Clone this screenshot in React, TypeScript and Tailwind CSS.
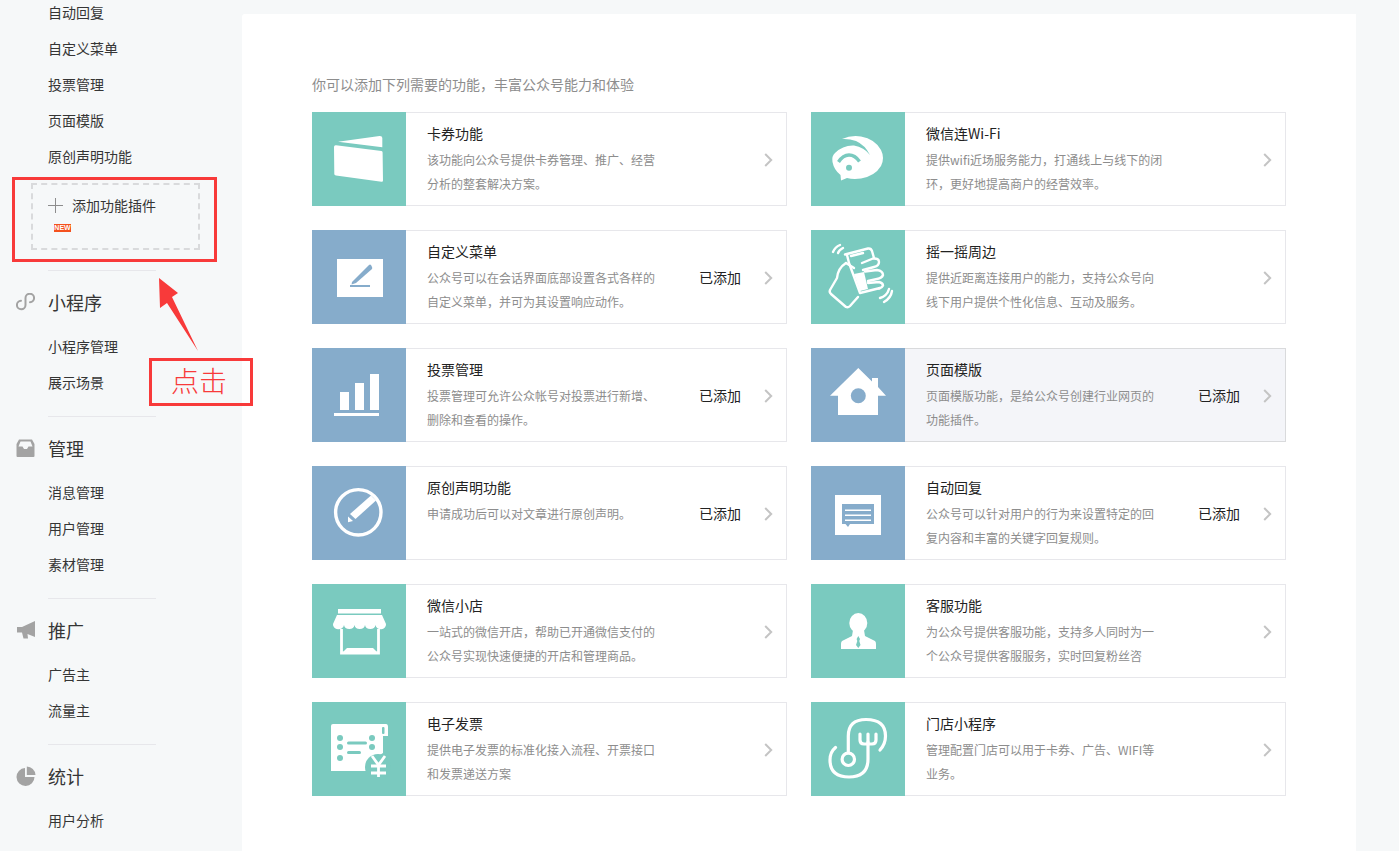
import React from "react";

const cnFont = "font-['Noto_Sans_CJK_SC','Liberation_Sans',sans-serif]";

const TEAL = "bg-[#7acabf]";
const BLUE = "bg-[#86accb]";

const CardIcon = () => (
  <>
    <path d="M26 29.7 L67.5 24 Q70.3 23.8 70.3 26 L70.3 35.3 Z" fill="#fff" />
    <path d="M22 35 Q22 33 24 33.2 L69.5 39 Q70.6 39.2 70.6 40.5 L71 68.5 Q71 70 69.5 69.8 L24 63.6 Q22.3 63.3 22.3 62 Z" fill="#fff" />
  </>
);

const WifiIcon = () => (
  <>
    <path
      d="M31 27 Q40 23 50 24.500 Q64 27 70 38 Q74 46 70 54 Q64 64 50 66.500 Q42 67.500 36 66 L30 68.500 L29.500 63 Q23 58 21.500 50 Q20.500 44 24 41 Q32 33 43 33.500 Q53 35 59 43 Q54 33 45 29 Q38 26.500 31 27 Z"
      fill="#fff"
    />
    <path d="M27.500 50 Q32 43 38 43 Q44 43 48.500 49.500" fill="none" stroke="#7acabf" strokeWidth="3.400" />
    <circle cx="38" cy="55.700" r="3" fill="#7acabf" />
  </>
);

const ShakeIcon = () => (
  <>
    <path d="M43 44 L53 42 L57 59 L49 61 Z" fill="#fff" />
    <g fill="none" stroke="#fff" strokeWidth="2.400" strokeLinecap="round" strokeLinejoin="round">
      <path d="M22 22 Q24 17 29 15" />
      <path d="M27 23 Q28 20 32 18" />
      <path d="M69 68 Q76 66 78 59" />
      <path d="M73 72 Q80 68 81 61" />
      <path d="M34 24.500 L57 18.500 Q60 18 61 21 L63 28" />
      <path d="M40 26 L52 23" />
      <path d="M36 25 L38 33 M38 33 L49 63 L69 58" />
      <path d="M51 33 L62 28.500 Q68 28 68 32 Q68 36 63 37 L52 40" />
      <path d="M54 41.500 L66 40 Q72 41 72 45 Q71 48 66 49 L57 51" />
      <path d="M57 53 L68 52 Q72 53 72 55.500 Q71 58 68 58.500" />
      <path d="M35 33 Q27 38 26 48 L19 60 Q18 62 20 64 L35 77 Q37 78 39 76 L47 67" />
      <path d="M35 33 L43 38" />
    </g>
  </>
);

const MenuIcon = () => (
  <>
    <rect x="25" y="29" width="46" height="38" fill="#fff" />
    <path d="M40 52 L57 35 Q58 34 59 35 L60 37 Q60.500 38 60 39 L44 53 L39.500 54.500 Z" fill="#86accb" />
    <rect x="38" y="55" width="20" height="2" fill="#86accb" />
  </>
);

const BarsIcon = () => (
  <g fill="#fff">
    <rect x="28" y="44" width="9" height="18" />
    <rect x="43" y="35" width="9" height="27" />
    <rect x="58" y="26" width="9" height="36" />
    <rect x="22" y="65" width="45" height="3" />
  </g>
);

const HouseIcon = () => (
  <>
    <path d="M47.300 20 L61 33.500 L61 30 L67 30 L67 39 L75 47.700 L67 47.700 L67 67 L27 67 L27 47.700 L19 47.700 Z" fill="#fff" />
    <circle cx="47.300" cy="47.700" r="7.500" fill="#86accb" />
  </>
);

const OriginalIcon = () => (
  <>
    <circle cx="46.300" cy="46.300" r="22.700" fill="none" stroke="#fff" strokeWidth="3.400" />
    <path d="M38 48 L59 29.500 L64 34.500 L43.500 53 Z" fill="#fff" />
    <path d="M36 50.500 L41 55 L36 56.300 Z" fill="#fff" />
  </>
);

const ReplyIcon = () => (
  <>
    <rect x="24" y="29" width="46" height="40" fill="#fff" />
    <path d="M31 38 H63 V58 H50 H39 L37 61 L34.500 58 H31 Z" fill="#86accb" />
    <g fill="#fff">
      <rect x="34" y="43.500" width="26" height="1.500" />
      <rect x="34" y="48.500" width="26" height="1.500" />
      <rect x="34" y="53.500" width="26" height="1.500" />
    </g>
  </>
);

const ShopIcon = () => (
  <>
    <rect x="26" y="25" width="43" height="4.500" fill="#fff" />
    <path d="M25 31 H70 L74 40 A5 4.500 0 0 1 63.500 41 A5.300 4.500 0 0 1 53 41 A5.300 4.500 0 0 1 42.500 41 A5.300 4.500 0 0 1 32 41 A5.300 4.500 0 0 1 21 40 Z" fill="#fff" />
    <path d="M29.500 45 V69 H66.500 V45" fill="none" stroke="#fff" strokeWidth="2.800" />
    <path d="M31 68 L35 64 H61 L65 68 Z" fill="#fff" />
  </>
);

const ServiceIcon = () => (
  <>
    <ellipse cx="47.300" cy="39" rx="9" ry="10" fill="#fff" />
    <path d="M42 46 H53 L54 52 L64 57 Q65 58 65 60 V65 H30 V60 Q30 58 31 57 L41 52 Z" fill="#fff" />
    <path d="M47.300 52 L49 55 L48.300 57 L49.500 61 L47.300 64 L45 61 L46.300 57 L45.600 55 Z" fill="#7acabf" />
  </>
);

const InvoiceIcon = () => (
  <>
    <path d="M21 22 H74 Q76 22 76 25 V34 H71 V40 V51 Q68 53 66 54 V69 H19 V24 Q19 22 21 22 Z" fill="#fff" />
    <rect x="70" y="25" width="2.500" height="7" rx="1" fill="#7acabf" />
    <g fill="#7acabf">
      <circle cx="28" cy="36" r="3" />
      <circle cx="28" cy="45" r="3" />
      <circle cx="28" cy="56" r="3" />
      <circle cx="60" cy="36" r="3" />
      <circle cx="60" cy="45" r="3" />
      <rect x="35" y="39.500" width="20" height="3" rx="1.500" />
      <rect x="35" y="49" width="14" height="3" rx="1.500" />
      <circle cx="66" cy="65" r="13" />
    </g>
    <g fill="none" stroke="#fff" strokeWidth="2.800">
      <path d="M60 54 L66.500 63 L73 54" />
      <path d="M59 64 H74 M59 71 H74 M66.500 63 V75" />
    </g>
  </>
);

const StoreIcon = () => (
  <g fill="none" stroke="#fff" strokeWidth="3.200" strokeLinecap="round" strokeLinejoin="round">
    <circle cx="37.300" cy="57.300" r="6.200" />
    <path d="M37.300 50 V34 Q37.300 17.500 55 17.500 Q74.500 17.500 74.500 34 Q74.500 42 69 48" />
    <path d="M24.500 45.500 Q19 50 19 58 Q19 75 38 75 Q57 75 57 57 V40" />
    <path d="M49 32 V38 Q49 42 53 42 H61 Q65 42 65 38 V32 M57 32 V40" />
  </g>
);

interface Feature {
  title: string;
  lines: string[];
  color: string;
  icon: React.ReactNode;
  added?: boolean;
  hover?: boolean;
}

const features: Feature[] = [
  { title: "卡券功能", lines: ["该功能向公众号提供卡券管理、推广、经营", "分析的整套解决方案。"], color: TEAL, icon: <CardIcon /> },
  { title: "微信连Wi-Fi", lines: ["提供wifi近场服务能力，打通线上与线下的闭", "环，更好地提高商户的经营效率。"], color: TEAL, icon: <WifiIcon /> },
  { title: "自定义菜单", lines: ["公众号可以在会话界面底部设置各式各样的", "自定义菜单，并可为其设置响应动作。"], color: BLUE, icon: <MenuIcon />, added: true },
  { title: "摇一摇周边", lines: ["提供近距离连接用户的能力，支持公众号向", "线下用户提供个性化信息、互动及服务。"], color: TEAL, icon: <ShakeIcon /> },
  { title: "投票管理", lines: ["投票管理可允许公众帐号对投票进行新增、", "删除和查看的操作。"], color: BLUE, icon: <BarsIcon />, added: true },
  { title: "页面模版", lines: ["页面模版功能，是给公众号创建行业网页的", "功能插件。"], color: BLUE, icon: <HouseIcon />, added: true, hover: true },
  { title: "原创声明功能", lines: ["申请成功后可以对文章进行原创声明。"], color: BLUE, icon: <OriginalIcon />, added: true },
  { title: "自动回复", lines: ["公众号可以针对用户的行为来设置特定的回", "复内容和丰富的关键字回复规则。"], color: BLUE, icon: <ReplyIcon />, added: true },
  { title: "微信小店", lines: ["一站式的微信开店，帮助已开通微信支付的", "公众号实现快速便捷的开店和管理商品。"], color: TEAL, icon: <ShopIcon /> },
  { title: "客服功能", lines: ["为公众号提供客服功能，支持多人同时为一", "个公众号提供客服服务，实时回复粉丝咨"], color: TEAL, icon: <ServiceIcon /> },
  { title: "电子发票", lines: ["提供电子发票的标准化接入流程、开票接口", "和发票递送方案"], color: TEAL, icon: <InvoiceIcon /> },
  { title: "门店小程序", lines: ["管理配置门店可以用于卡券、广告、WIFI等", "业务。"], color: TEAL, icon: <StoreIcon /> },
];

const FeatureCard: React.FC<{ item: Feature }> = ({ item }) => (
  <div className="flex h-[94px] w-[475px]">
    <div className={`${item.color} h-[94px] w-[94px] shrink-0`}>
      <svg viewBox="0 0 94 94" className="h-[94px] w-[94px]">
        {item.icon}
      </svg>
    </div>
    <div
      className={`flex flex-1 items-center border border-l-0 pr-[13px] ${
        item.hover ? "border-[#d9dadc] bg-[#f4f5f9]" : "border-[#e7e7eb] bg-white"
      }`}
    >
      <div className="ml-[21px] h-full flex-1 pt-[8px]">
        <h4 className="text-[14px] font-normal leading-[24px] text-[#222]">{item.title}</h4>
        <div className="mt-[3px] text-[12px] leading-[24px] text-[#8d8d8d]">
          {item.lines.map((line) => (
            <p key={line} className="whitespace-nowrap">
              {line}
            </p>
          ))}
        </div>
      </div>
      {item.added && <span className="mr-[23px] text-[14px] leading-[24px] text-[#222]">已添加</span>}
      <svg viewBox="0 0 9 14" className="mt-[2px] h-[14px] w-[9px]">
        <path d="M1.200 1 L7.200 7 L1.200 13" fill="none" stroke="#c4c4c4" strokeWidth="2" />
      </svg>
    </div>
  </div>
);

const MiniProgramIcon = () => (
  <svg viewBox="0 0 19 18" className="h-[18px] w-[19px]">
    <path
      d="M5 7.700 A4.300 4.300 0 1 0 9.500 12 V5 A4.300 4.300 0 1 1 14 9.300"
      fill="none"
      stroke="#a3a3a3"
      strokeWidth="2"
      strokeLinecap="round"
    />
  </svg>
);

const InboxIcon = () => (
  <svg viewBox="0 0 19 18" className="h-[18px] w-[19px]">
    <path
      d="M3 0.500 H16 L18.500 5 V17 Q18.500 18 17.500 18 H1.500 Q0.500 18 0.500 17 V5 Z M4.500 2.500 L2.500 7.500 H6.500 L8 10 H11 L12.500 7.500 H16.500 L14.500 2.500 Z"
      fill="#a3a3a3"
      fillRule="evenodd"
    />
  </svg>
);

const HornIcon = () => (
  <svg viewBox="0 0 20 20" className="h-[20px] w-[20px]">
    <path d="M1 7 H6 L19 1 V17 L11.500 14 L12 18.500 H7.500 L6 12.500 H1 Z" fill="#a3a3a3" />
  </svg>
);

const PieIcon = () => (
  <svg viewBox="0 0 20 20" className="h-[20px] w-[20px]">
    <path d="M9 2 A9 9 0 1 0 18.500 11 H9 Z" fill="#a3a3a3" />
    <path d="M10.800 0.500 A9 9 0 0 1 19.500 9 H10.800 Z" fill="#a3a3a3" />
  </svg>
);

const NavItem: React.FC<{ label: string }> = ({ label }) => (
  <a className="block h-[36px] pl-[48px] text-[14px] leading-[34px] text-[#353535]">{label}</a>
);

const NavGroup: React.FC<{ title: string; icon: React.ReactNode; items: string[]; last?: boolean }> = ({
  title,
  icon,
  items,
  last,
}) => (
  <div>
    <div className="ml-[48px] h-px w-[108px] bg-[#e7e7eb]" />
    <div className="flex h-[52px] items-center pt-[10px]">
      <span className="flex w-[48px] justify-start pl-[16px]">{icon}</span>
      <span className="text-[18px] leading-[38px] text-[#353535]">{title}</span>
    </div>
    <div className={`mt-[6px] ${last ? "" : "pb-[15px]"}`}>
      {items.map((item) => (
        <NavItem key={item} label={item} />
      ))}
    </div>
  </div>
);

const Sidebar = () => (
  <aside className="w-[242px] shrink-0 -mt-[5px]">
    {["自动回复", "自定义菜单", "投票管理", "页面模版", "原创声明功能"].map((item) => (
      <NavItem key={item} label={item} />
    ))}
    <div className="mb-[20px] ml-[31px] mt-[8px] h-[67px] w-[169px] border-2 border-dashed border-[#d9dadc] pl-[15px] pt-[8px]">
      <div className="flex h-[24px] items-center">
        <svg viewBox="0 0 15 15" className="h-[15px] w-[15px]">
          <path d="M7.500 0 V15 M0 7.500 H15" stroke="#8d8d8d" strokeWidth="1" />
        </svg>
        <span className="ml-[9px] text-[14px] leading-[24px] text-[#353535]">添加功能插件</span>
      </div>
      <span className="ml-[6px] mt-[7px] flex h-[8px] w-[17px] items-center justify-center bg-[#f4511e] font-['Liberation_Sans',sans-serif] text-[7px] font-bold leading-[8px] text-white">
        NEW
      </span>
    </div>
    <NavGroup title="小程序" icon={<MiniProgramIcon />} items={["小程序管理", "展示场景"]} />
    <NavGroup title="管理" icon={<InboxIcon />} items={["消息管理", "用户管理", "素材管理"]} />
    <NavGroup title="推广" icon={<HornIcon />} items={["广告主", "流量主"]} />
    <NavGroup title="统计" icon={<PieIcon />} items={["用户分析"]} last />
  </aside>
);

// red markup someone drew over the screenshot
const Annotation = () => (
  <>
    <div className="absolute left-[12px] top-[177px] h-[85px] w-[205px] border-[3px] border-[#f83a3a]" />
    <svg viewBox="0 0 60 80" className="absolute left-[155px] top-[275px] h-[80px] w-[60px]">
      <path d="M4 3 L23 18 L17 22 L43 76 L12 28 L5 33 Z" fill="#f83a3a" />
    </svg>
    <div className="absolute left-[149px] top-[358px] flex h-[48px] w-[104px] items-center justify-center border-[3px] border-[#f83a3a] pb-[4px] pr-[4px] text-[28px] font-light leading-[40px] text-[#f83a3a]">
      点击
    </div>
  </>
);

export default function App() {
  return (
    <div className={`${cnFont} relative flex h-[851px] w-[1399px] overflow-hidden bg-[#f6f8f9]`}>
      <Sidebar />
      <main className="mt-[14px] w-[1114px] rounded-tl-[3px] bg-white pl-[70px]">
        <p className="mt-[58px] text-[14px] leading-[24px] text-[#8d8d8d]">你可以添加下列需要的功能，丰富公众号能力和体验</p>
        <div className="mt-[16px] grid w-[974px] grid-cols-2 gap-x-[24px] gap-y-[24px]">
          {features.map((item) => (
            <FeatureCard key={item.title} item={item} />
          ))}
        </div>
      </main>
      <Annotation />
    </div>
  );
}
